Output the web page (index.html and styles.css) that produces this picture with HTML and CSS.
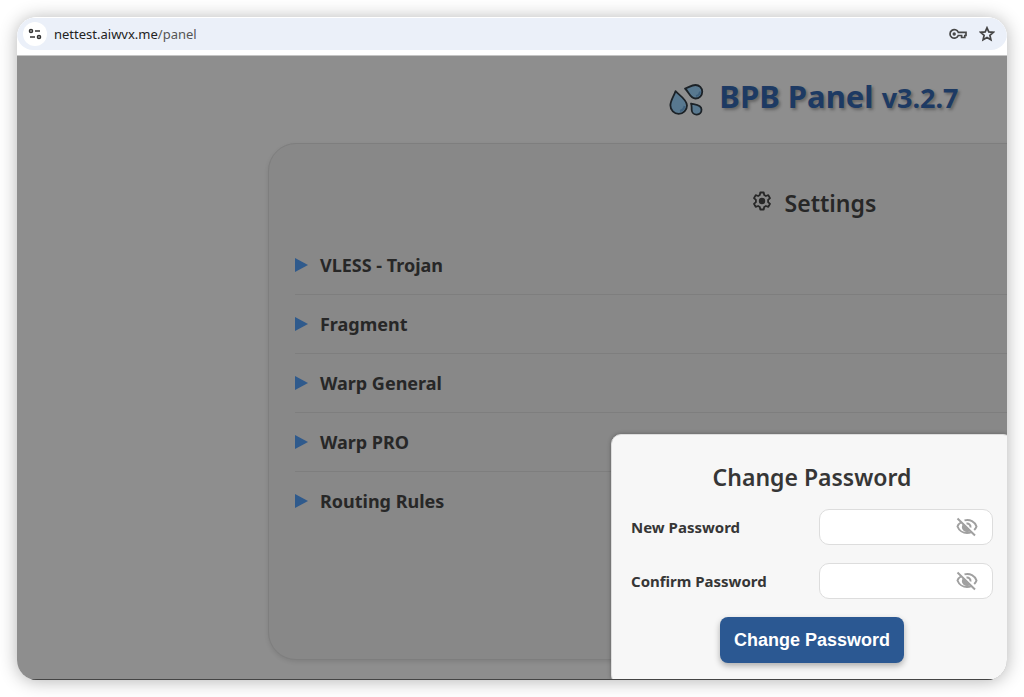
FILE: index.html
```html
<!DOCTYPE html>
<html lang="en">
<head>
    <meta charset="UTF-8">
    <meta name="viewport" content="width=device-width, initial-scale=1.0">
    <title>BPB Panel</title>
    <link rel="stylesheet" href="styles.css">
</head>
<body>
    <div class="browser">
        <header class="toolbar">
            <div class="omnibox">
                <button class="site-info" aria-label="Site information">
                    <svg width="14" height="12" viewBox="0 0 14 12" fill="none" stroke="#333" stroke-width="1.6">
                        <circle cx="3" cy="3" r="1.5"/>
                        <path d="M7 3h5M2 9h5"/>
                        <circle cx="11" cy="9" r="1.5"/>
                    </svg>
                </button>
                <div class="url">nettest.aiwvx.me<span>/panel</span></div>
                <button class="icon-button" aria-label="Passwords">
                    <svg width="18" height="12" viewBox="0 0 18 12" fill="none" stroke="#484848" stroke-width="1.7">
                        <path d="M9.300 4.300H17v3.200h-1.200v2h-3.200v-2H9.300a4.300 4.300 0 1 1 0-3.200z"/>
                        <circle cx="5.200" cy="6" r="1.700" fill="#484848" stroke="none"/>
                    </svg>
                </button>
                <button class="icon-button" aria-label="Bookmark this page">
                    <svg width="16" height="16" viewBox="0 0 16 16" fill="none" stroke="#444" stroke-width="1.7">
                        <path d="M8 1.800l1.800 4.100 4.500.4-3.400 3 1 4.400L8 11.400l-3.900 2.300 1-4.400-3.400-3 4.500-.4z"/>
                    </svg>
                </button>
            </div>
        </header>

        <div class="viewport">
            <main class="page">
                <h1>
                    <svg width="36" height="34" viewBox="0 0 36 34" fill="#58788f" stroke="#1c2227" stroke-width="1.8" stroke-linejoin="round">
                        <path d="M6.500 8.200C9 11 18 16.500 18 22.500a8.300 8.300 0 0 1-16.600 0C1.400 17.500 5 13 6.500 8.200z"/>
                        <path d="M16 5.500C20 4.500 22 2 26.500 2a6.600 6.600 0 0 1 0 13.500C21 15.500 20 9 16 5.500z"/>
                        <path d="M22 20.500c3 1 10.500.5 10.500 6a4.900 4.900 0 0 1-9.800.5c-.2-2.500.3-4-.7-6.500z"/>
                        <path d="M15.500 23a6 6 0 0 1-4.500 5M31 8.500a5 5 0 0 1-4 4.500" fill="none" stroke="#40617d" stroke-width="2"/>
                    </svg>
                    <span>BPB Panel <small>v3.2.7</small></span>
                </h1>
                <section class="form-container">
                    <h2>
                        <svg width="20" height="20" viewBox="0 0 20 20" fill="none" stroke="#272727" stroke-width="1.8" stroke-linejoin="round">
                            <path d="M8.300 1.500h3.400l.5 2.500 1.700 1 2.400-.8 1.700 2.900-1.900 1.700v2.400l1.900 1.700-1.700 2.900-2.400-.8-1.700 1-.5 2.500H8.300L7.800 16l-1.700-1-2.400.8L2 12.900l1.900-1.700V8.800L2 7.100l1.700-2.900 2.400.8 1.700-1z"/>
                            <circle cx="10" cy="10" r="3.200" fill="#272727" stroke="none"/>
                        </svg>
                        <span>Settings</span>
                    </h2>
                    <details><summary>VLESS - Trojan</summary></details>
                    <details><summary>Fragment</summary></details>
                    <details><summary>Warp General</summary></details>
                    <details><summary>Warp PRO</summary></details>
                    <details><summary>Routing Rules</summary></details>
                </section>
            </main>

            <form class="modal">
                <h2>Change Password</h2>
                <div class="form-control">
                    <label for="newPassword">New Password</label>
                    <div class="password-box">
                        <input type="password" id="newPassword">
                        <button type="button" class="toggle-password" aria-label="Show new password">
                            <svg width="22" height="20" viewBox="0 0 22 20" fill="none" stroke="#a0a0a0" stroke-width="2">
                                <path d="M5.500 5C3.500 6.200 2 8 1.500 9.500 3 13.500 7 16 11 16c1.500 0 3-.3 4.300-.9M8.500 3.400C14 2 19 4.800 20.500 9.500c-.4 1.300-1.300 2.500-2.300 3.400"/>
                                <path d="M7.500 8a4 4 0 0 0 5.700 5.300z" fill="#a0a0a0"/>
                                <path d="M10.500 6.500a3.500 3.500 0 0 1 4 4M1.500 1.500l17.500 17"/>
                            </svg>
                        </button>
                    </div>
                </div>
                <div class="form-control">
                    <label for="confirmPassword">Confirm Password</label>
                    <div class="password-box">
                        <input type="password" id="confirmPassword">
                        <button type="button" class="toggle-password" aria-label="Show confirmed password">
                            <svg width="22" height="20" viewBox="0 0 22 20" fill="none" stroke="#a0a0a0" stroke-width="2">
                                <path d="M5.500 5C3.500 6.200 2 8 1.500 9.500 3 13.500 7 16 11 16c1.500 0 3-.3 4.300-.9M8.500 3.400C14 2 19 4.800 20.500 9.500c-.4 1.300-1.300 2.500-2.300 3.400"/>
                                <path d="M7.500 8a4 4 0 0 0 5.700 5.300z" fill="#a0a0a0"/>
                                <path d="M10.500 6.500a3.500 3.500 0 0 1 4 4M1.500 1.500l17.500 17"/>
                            </svg>
                        </button>
                    </div>
                </div>
                <button type="submit" class="button">Change Password</button>
            </form>
        </div>
    </div>
</body>
</html>
```
FILE: styles.css
```css
* {
    box-sizing: border-box;
}

body {
    margin: 0;
    padding: 17px;
    height: 100vh;
    background-color: #fff;
    color: #272727;
    font-family: 'Noto Sans', sans-serif;
}

button {
    padding: 0;
    border: none;
    background: none;
    cursor: pointer;
}

svg {
    display: block;
    flex: none;
}

.browser {
    display: flex;
    flex-direction: column;
    height: 100%;
    border-radius: 20px;
    overflow: hidden;
    box-shadow: 0 1px 18px rgba(0, 0, 0, 0.3);
}

.toolbar {
    padding: 1px 0 5px;
    background-color: #fff;
    border-bottom: 1px solid #c4c4c4;
}

.omnibox {
    display: flex;
    align-items: center;
    gap: 12px;
    height: 32px;
    padding: 0 12px 0 6px;
    border-radius: 16px;
    background-color: #ebf0f9;
}

.site-info {
    display: flex;
    align-items: center;
    justify-content: center;
    width: 24px;
    height: 24px;
    border-radius: 50%;
    background-color: #fff;
}

.url {
    flex: 1;
    margin-left: -5px;
    font-size: 13px;
    color: #222;
}

.url span {
    color: #555;
}

/* Page behind the dialog */
.viewport {
    position: relative;
    flex: 1;
    overflow: hidden;
    background-color: #8e8e8e;
    border-bottom: 1px solid #444;
}

.page {
    width: 161%;
    padding-top: 16px;
}

h1,
h2 {
    display: flex;
    align-items: center;
    justify-content: center;
    margin: 0;
}

h1 {
    gap: 14px;
    font-size: 31px;
    line-height: 48px;
    color: #1d3a63;
    text-shadow: 2px 2px 3px rgba(0, 0, 0, 0.3);
}

h1 svg {
    margin-top: 6px;
}

h1 small {
    font-size: 27px;
}

h2 {
    gap: 13px;
    font-size: 23px;
    font-weight: 600;
    line-height: 32px;
}

.form-container {
    width: 1092px;
    min-height: 517px;
    margin: 21px auto 0;
    padding: 43px 26px 0;
    border: 1px solid #7e7e7e;
    border-radius: 28px;
    background-color: #888;
    box-shadow: 0 2px 4px rgba(0, 0, 0, 0.1);
}

.form-container h2 {
    margin-bottom: 17px;
}

.form-container h2 svg {
    margin-bottom: 4px;
}

details {
    border-bottom: 1px solid #7e7e7e;
}

details:last-child {
    border-bottom: none;
}

summary {
    display: flex;
    align-items: center;
    gap: 12px;
    height: 58px;
    font-size: 18px;
    font-weight: 700;
    cursor: pointer;
}

summary::before {
    content: '';
    border-left: 13px solid #2f5a8c;
    border-top: 7px solid transparent;
    border-bottom: 7px solid transparent;
}

/* Change password dialog */
.modal {
    position: absolute;
    top: 378px;
    left: 60%;
    width: 402px;
    padding: 26px 19px 21px;
    border: 1px solid #ddd;
    border-radius: 10px;
    background-color: #f7f7f7;
    color: #363636;
    box-shadow: 0 0 4px rgba(0, 0, 0, 0.3);
}

.modal h2 {
    margin-bottom: 16px;
}

.form-control {
    display: flex;
    align-items: center;
    justify-content: space-between;
    margin-bottom: 18px;
}

.form-control label {
    font-size: 15px;
    font-weight: 700;
}

.password-box {
    display: flex;
    align-items: center;
    width: 174px;
    height: 36px;
    padding-right: 14px;
    border: 1px solid #ddd;
    border-radius: 10px;
    background-color: #fff;
}

.password-box input {
    flex: 1;
    min-width: 0;
    height: 100%;
    padding: 0 10px;
    border: none;
    outline: none;
    background: none;
    font-size: 16px;
}

.button {
    display: block;
    margin: 0 auto;
    padding: 12px 14px;
    border-radius: 8px;
    background-color: #2b5892;
    color: #fff;
    font-family: 'Liberation Sans', Arial, sans-serif;
    font-size: 18px;
    font-weight: 600;
    line-height: 22px;
    box-shadow: 0 3px 6px rgba(0, 0, 0, 0.3);
}
```
